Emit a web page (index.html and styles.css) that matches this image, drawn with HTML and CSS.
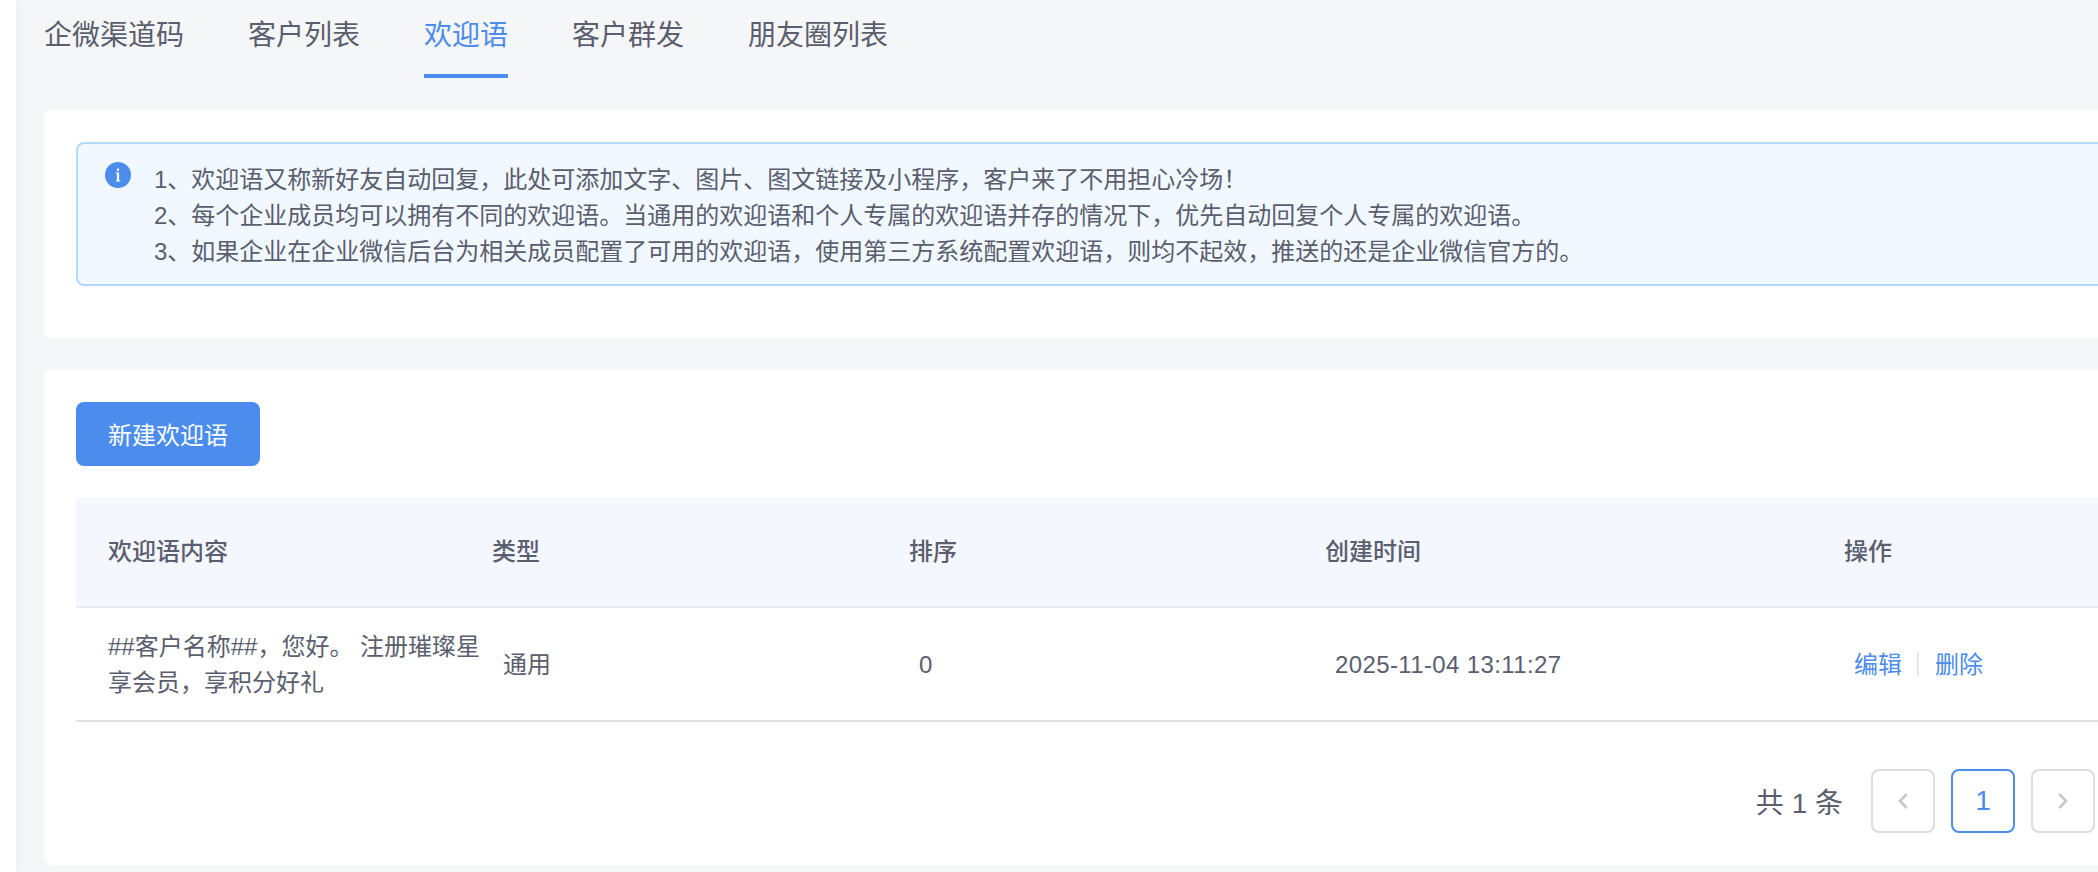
FILE: index.html
```html
<!DOCTYPE html>
<html lang="zh-CN">
<head>
<meta charset="utf-8">
<title>欢迎语</title>
<link rel="stylesheet" href="styles.css">
</head>
<body>
<div class="shell">
  <aside class="edge"></aside>
  <main class="main">
    <nav class="tabs">
      <a class="tab">企微渠道码</a>
      <a class="tab">客户列表</a>
      <a class="tab active">欢迎语</a>
      <a class="tab">客户群发</a>
      <a class="tab">朋友圈列表</a>
    </nav>
    <section class="card notice-card">
      <div class="alert">
        <svg class="alert-icon" viewBox="0 0 26 26" aria-hidden="true">
          <circle cx="13" cy="13" r="13" fill="#4b8cec"/>
          <rect x="11.9" y="6.5" width="2.2" height="2.4" fill="#fff"/>
          <path d="M10.8 10.6h3.3v7.9h1.2v1h-4.6v-1h1.2v-6.9h-1.1z" fill="#fff"/>
        </svg>
        <div class="alert-text">
          <p>1、欢迎语又称新好友自动回复，此处可添加文字、图片、图文链接及小程序，客户来了不用担心冷场！</p>
          <p>2、每个企业成员均可以拥有不同的欢迎语。当通用的欢迎语和个人专属的欢迎语并存的情况下，优先自动回复个人专属的欢迎语。</p>
          <p>3、如果企业在企业微信后台为相关成员配置了可用的欢迎语，使用第三方系统配置欢迎语，则均不起效，推送的还是企业微信官方的。</p>
        </div>
      </div>
    </section>
    <section class="card list-card">
      <button class="primary-btn" type="button">新建欢迎语</button>
      <table class="table">
        <colgroup>
          <col class="col-content"><col class="col-type"><col class="col-sort"><col class="col-time"><col class="col-op">
        </colgroup>
        <thead>
          <tr>
            <th class="first">欢迎语内容</th>
            <th>类型</th>
            <th>排序</th>
            <th>创建时间</th>
            <th>操作</th>
          </tr>
        </thead>
        <tbody>
          <tr>
            <td class="first">##客户名称##，您好。 注册璀璨星享会员，享积分好礼</td>
            <td class="type">通用</td>
            <td>0</td>
            <td class="time">2025-11-04 13:11:27</td>
            <td class="ops"><a class="link">编辑</a><span class="sep"></span><a class="link">删除</a></td>
          </tr>
        </tbody>
      </table>
      <div class="pager">
        <span class="total">共 1 条</span>
        <button class="page-btn" type="button" aria-label="上一页">
          <svg viewBox="0 0 12 18" class="chev" aria-hidden="true"><path d="M9.8 2 3 9l6.8 7" /></svg>
        </button>
        <button class="page-btn current" type="button">1</button>
        <button class="page-btn" type="button" aria-label="下一页">
          <svg viewBox="0 0 12 18" class="chev" aria-hidden="true"><path d="M2.2 2 9 9l-6.8 7" /></svg>
        </button>
      </div>
    </section>
  </main>
</div>
</body>
</html>
```

FILE: styles.css
```css
* { box-sizing: border-box; }
html, body { margin: 0; height: 100%; overflow: hidden; }
body {
  font-family: "Liberation Sans", "Noto Sans CJK SC", sans-serif;
  color: #5a5e6e;
  background: #f5f6f8;
}
.shell { display: flex; width: 2098px; height: 872px; overflow: hidden; }
.edge { flex: 0 0 16px; background: #fff; position: relative; box-shadow: 2px 0 12px rgba(0, 0, 0, 0.04); }
.main { flex: 0 0 auto; width: 2124px; padding: 0 0 0 28px; background: #f5f6f8; }
.tabs { display: flex; gap: 64px; height: 78px; }
.tab {
  height: 78px;
  font-size: 28px;
  line-height: 72px;
  color: #5a5e6e;
  border-bottom: 4px solid transparent;
}
.tab.active { color: #4b8cec; border-bottom-color: #4b8cec; }
.card { width: 2096px; background: #fff; border-radius: 8px; padding: 32px; margin-top: 32px; }
.notice-card { padding-bottom: 52px; }
.alert {
  display: flex;
  height: 144px;
  padding: 18px 0 0 27px;
  background: #f1f8ff;
  border: 2px solid #b3d8fb;
  border-radius: 8px;
}
.alert-icon { flex: 0 0 26px; width: 26px; height: 26px; margin: 0 23px 0 0; }
.alert-text { font-size: 24px; line-height: 36px; }
.alert-text p { margin: 0; white-space: nowrap; }
.primary-btn {
  display: block;
  width: 184px;
  height: 64px;
  padding: 0 0 2px;
  border: 0;
  border-radius: 8px;
  background: #4b8cec;
  color: #fff;
  font: inherit;
  font-size: 24px;
}
.table { width: 2032px; margin-top: 32px; border-collapse: separate; border-spacing: 0; table-layout: fixed; font-size: 24px; line-height: 36px; }
.col-content { width: 416px; }
.col-type { width: 417px; }
.col-sort { width: 416px; }
.col-time { width: 519px; }
.table th {
  height: 110px;
  padding: 0;
  text-align: left;
  font-weight: 500;
  background: #f4f7fe;
  border-bottom: 2px solid #e9ebf0;
}
.table td { height: 114px; padding: 2px 0 0 10px; border-bottom: 2px solid #e0e1e6; }
.table th.first, .table td.first { padding-left: 32px; padding-right: 8px; }
.table td.type { padding-left: 11px; }
.table td.time { letter-spacing: 0.38px; }
.ops { white-space: nowrap; }
.link { color: #4b8cec; }
.sep { display: inline-block; width: 2px; height: 24px; margin: 0 16px 0 15px; background: #e6e8ec; vertical-align: -3px; }
.pager { display: flex; align-items: center; justify-content: flex-end; gap: 16px; margin: 47px 13px 0 0; }
.total { font-size: 28px; margin-right: 12px; }
.page-btn {
  display: flex;
  align-items: center;
  justify-content: center;
  width: 64px;
  height: 64px;
  padding: 0;
  background: #fff;
  border: 2px solid #dcdde2;
  border-radius: 8px;
  font: inherit;
  font-size: 28px;
  color: #4b8cec;
}
.page-btn.current { border-color: #4b8cec; }
.chev { width: 12px; height: 18px; fill: none; stroke: #c8c9cc; stroke-width: 2.8; }
```
